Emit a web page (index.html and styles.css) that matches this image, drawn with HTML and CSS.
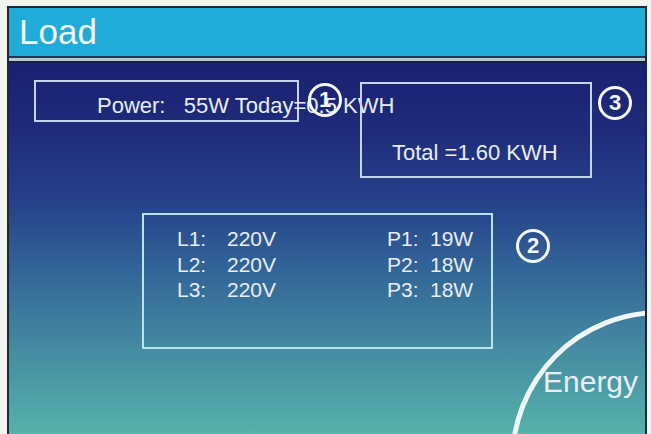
FILE: index.html
```html
<!DOCTYPE html>
<html lang="en">
<head>
  <meta charset="UTF-8" />
  <meta name="viewport" content="width=device-width, initial-scale=1.0"/>
  <title>Load</title>
  <link rel="stylesheet" href="styles.css">
</head>
<body>
  <div class="panel">
    <div class="title">Load</div>
    <div class="divider"></div>
    <div class="screen">
      <div class="row-top">
        <div class="box box-power">Power:&nbsp;&nbsp;&nbsp;55W Today=0.5 KWH</div>
        <span class="badge badge-1">1</span>
        <div class="box box-total">Total =1.60 KWH</div>
        <span class="badge badge-3">3</span>
      </div>
      <div class="row-mid">
        <div class="box box-lines">
          <span>L1:</span><span>220V</span><span>P1:</span><span>19W</span>
          <span>L2:</span><span>220V</span><span>P2:</span><span>18W</span>
          <span>L3:</span><span>220V</span><span>P3:</span><span>18W</span>
        </div>
        <span class="badge badge-2">2</span>
      </div>
      <div class="energy">Energy</div>
    </div>
  </div>
</body>
</html>
```

FILE: styles.css
```css
body {
  margin: 0;
  padding: 6px 0 0 7px;
  height: 434px;
  box-sizing: border-box;
  overflow: hidden;
  background: #f3f5f1;
  font-family: "Liberation Sans", Arial, sans-serif;
  color: #e8eef5;
}
.panel {
  width: 640px;
  box-sizing: border-box;
  border: 2px solid #1c2833;
  border-bottom: none;
}
.title {
  height: 48px;
  line-height: 48px;
  padding-left: 10px;
  font-size: 35px;
  color: #eef7fb;
  background: #21acd8;
  border-bottom: 2px solid #1b3a50;
}
.divider {
  height: 3px;
  background: #bcc6cc;
  border-bottom: 2px solid #141f48;
}
.screen {
  position: relative;
  height: 371px;
  overflow: hidden;
  padding-top: 17px;
  box-sizing: border-box;
  background: linear-gradient(to bottom, #1a2070 0%, #1f2b7a 18%, #26428a 38%, #326597 56%, #4387a0 75%, #56b2aa 100%);
  font-size: 22px;
}
.row-top, .row-mid { display: flex; align-items: flex-start; }
.box {
  box-sizing: border-box;
  border: 2px solid #c6d5ee;
  white-space: nowrap;
}
.box-power {
  margin-left: 25px;
  width: 265px;
  height: 42px;
  padding: 12px 0 0 61px;
  line-height: 24px;
}
.box-total {
  margin: 2px 0 0 18px;
  width: 232px;
  height: 96px;
  padding: 57px 0 0 30px;
  line-height: 24px;
}
.badge {
  width: 34px;
  height: 34px;
  box-sizing: border-box;
  border: 3px solid #f4f7fb;
  border-radius: 50%;
  font-weight: bold;
  font-size: 22px;
  line-height: 28px;
  text-align: center;
  color: #f4f7fb;
}
.badge-1 { margin: 3px 0 0 9px; }
.badge-3 { margin: 6px 0 0 6px; }
.row-mid { margin-top: 35px; }
.box-lines {
  margin-left: 133px;
  width: 351px;
  height: 136px;
  padding: 11px 0 0 33px;
  border-color: #b8e4f2;
  font-size: 21px;
  line-height: 25.5px;
  display: grid;
  grid-template-columns: 50px 160px 43px auto;
  align-content: start;
}
.badge-2 { margin: 16px 0 0 23px; }
.energy {
  position: absolute;
  left: 501px;
  top: 247px;
  width: 300px;
  height: 300px;
  box-sizing: border-box;
  border: 5px solid #eef6f6;
  border-radius: 50%;
  padding: 50px 0 0 28px;
  font-size: 30px;
  line-height: 34px;
}
```
